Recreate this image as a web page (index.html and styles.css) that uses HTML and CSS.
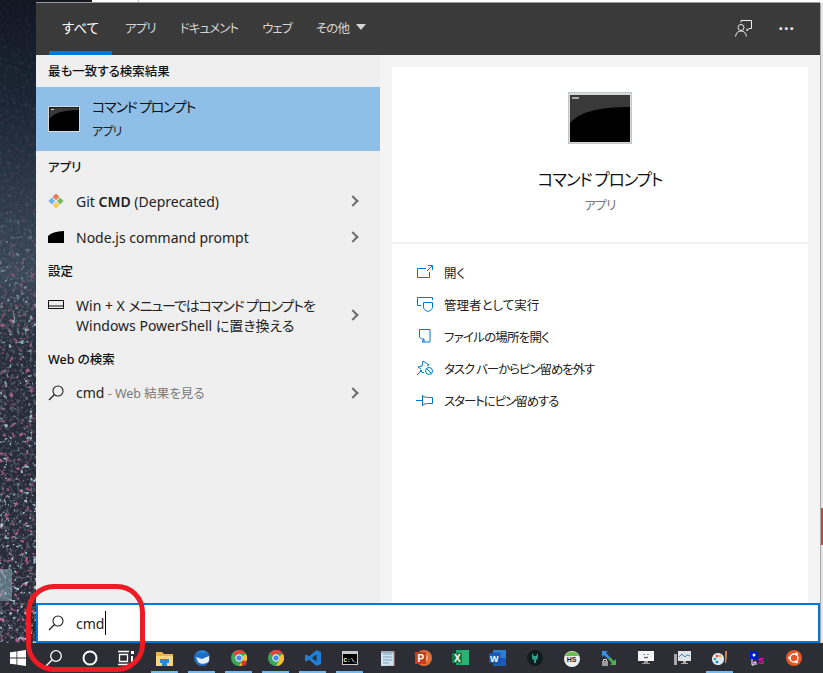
FILE: index.html
```html
<!DOCTYPE html>
<html lang="ja">
<head>
<meta charset="utf-8">
<title>cmd</title>
<link rel="stylesheet" href="styles.css">
</head>
<body>
<div class="stage">
  <div class="topstrip"><span class="ts-dark"></span><span class="ts-light"></span><span class="ts-line"></span><span class="ts-light grow"></span></div>
  <div class="middle">
    <svg class="wall" width="36" height="640" viewBox="0 0 36 640" aria-hidden="true">
      <defs>
        <filter id="spk" x="0" y="0" width="100%" height="100%"><feTurbulence type="fractalNoise" baseFrequency="0.2" numOctaves="2" seed="7"/><feColorMatrix values="0 0 0 0 .55  0 0 0 0 .13  0 0 0 0 .3  7 0 0 0 -4.3"/></filter>
        <filter id="spk2" x="0" y="0" width="100%" height="100%"><feTurbulence type="fractalNoise" baseFrequency="0.24" numOctaves="2" seed="21"/><feColorMatrix values="0 0 0 0 .42  0 0 0 0 .68  0 0 0 0 .74  0 7 0 0 -4.4"/></filter>
        <filter id="spk3" x="0" y="0" width="100%" height="100%"><feTurbulence type="fractalNoise" baseFrequency="0.3" numOctaves="2" seed="3"/><feColorMatrix values="0 0 0 0 .24  0 0 0 0 .29  0 0 0 0 .36  0 0 2 0 -1"/></filter>
        <linearGradient id="base" x1="0" y1="0" x2="0" y2="1"><stop offset="0" stop-color="#111723"/><stop offset=".16" stop-color="#1b2634"/><stop offset=".42" stop-color="#3a4856"/><stop offset=".55" stop-color="#262c38"/><stop offset="1" stop-color="#2a2c38"/></linearGradient>
        <linearGradient id="fade" x1="0" y1="0" x2="0" y2="1"><stop offset="0" stop-color="#111"/><stop offset=".3" stop-color="#222"/><stop offset=".5" stop-color="#bbb"/><stop offset="1" stop-color="#fff"/></linearGradient>
        <mask id="fm"><rect width="36" height="640" fill="url(#fade)"/></mask>
      </defs>
      <rect width="36" height="640" fill="url(#base)"/>
      <g mask="url(#fm)">
        <rect width="36" height="640" filter="url(#spk3)"/>
        <rect width="36" height="640" filter="url(#spk)"/>
        <rect width="36" height="640" filter="url(#spk2)"/>
      </g>
      <rect x="0" y="566" width="12" height="32" fill="#8fb8c4" opacity=".5"/>
    </svg>
    <div class="flyout">
      <nav class="tabs">
        <a class="tab tab-on">すべて</a>
        <a class="tab">アプリ</a>
        <a class="tab">ドキュメント</a>
        <a class="tab">ウェブ</a>
        <a class="tab">その他<i class="caret"></i></a>
        <span class="tabs-right">
          <svg class="fb" width="17" height="17" viewBox="0 0 17 17" aria-hidden="true"><path d="M6 2.500V.5h10.500v8h-2.500l-2 2.500V8.500" fill="none" stroke="#eee"/><circle cx="6" cy="7.500" r="3" fill="none" stroke="#eee"/><path d="M.6 16.500C.8 13 3 11 6 11s5 2 5.400 5.500" fill="none" stroke="#eee"/></svg>
          <span class="dots">···</span>
        </span>
      </nav>
      <div class="panes">
        <section class="left">
          <h2 class="lhead">最も一致する検索結果</h2>
          <div class="best">
            <svg class="cmd32" width="32" height="26" viewBox="0 0 32 26" aria-hidden="true"><rect x=".5" y=".5" width="31" height="25" fill="#000" stroke="#d8dbdc"/><path d="M1.500 13C5 7 14 4.500 30.500 4V1.500H1.500z" fill="#3a3a3a"/><rect x="3" y="3" width="3" height="1" fill="#ccc"/></svg>
            <div class="best-txt"><div class="best-t">コマンド プロンプト</div><div class="best-s">アプリ</div></div>
          </div>
          <h2 class="lhead">アプリ</h2>
          <div class="row r-std">
            <svg class="ric" width="16" height="16" viewBox="0 0 18 18" aria-hidden="true"><path d="M9 .5l3.800 3.800L9 8.100 5.200 4.300z" fill="#e57a52"/><path d="M.5 9l3.800-3.800L8.100 9l-3.800 3.800z" fill="#6cb4ee"/><path d="M17.500 9l-3.800-3.800L9.900 9l3.800 3.800z" fill="#7cb95e"/><path d="M9 17.500l-3.800-3.800L9 9.900l3.800 3.800z" fill="#f5c95c"/></svg>
            <span class="rtxt">Git <b>CMD</b> (Deprecated)</span><i class="chev"></i>
          </div>
          <div class="row r-std">
            <svg class="ric" width="16" height="12" viewBox="0 0 16 12" aria-hidden="true"><path d="M0 12V5C3 2 8 .5 16 0v12z" fill="#000"/></svg>
            <span class="rtxt">Node.js command prompt</span><i class="chev"></i>
          </div>
          <h2 class="lhead">設定</h2>
          <div class="row r-win">
            <svg class="ric ric-top" width="16" height="9" viewBox="0 0 16 9" aria-hidden="true"><path d="M.5.500h15v8H.500zM.5 6h15" fill="none" stroke="#111"/></svg>
            <span class="rtxt">Win + X <span class="kana">メニューではコマンド プロンプトを</span><br>Windows PowerShell に置き換える</span><i class="chev"></i>
          </div>
          <h2 class="lhead">Web の検索</h2>
          <div class="row r-std">
            <svg class="ric" width="16" height="16" viewBox="0 0 16 16" aria-hidden="true"><circle cx="10" cy="6" r="5" fill="none" stroke="#222" stroke-width="1.100"/><path d="M6.500 9.500L1 15" stroke="#222" stroke-width="1.200"/></svg>
            <span class="rtxt">cmd<span class="webhint"> - Web 結果を見る</span></span><i class="chev"></i>
          </div>
        </section>
        <section class="right">
          <div class="card">
            <div class="hero">
              <svg width="64" height="52" viewBox="0 0 64 52" aria-hidden="true"><rect x=".5" y=".5" width="63" height="51" fill="#d6d9da" stroke="#c4c7c8"/><rect x="2" y="3" width="60" height="47" fill="#000"/><path d="M2 31C12 20 30 15 62 15V3H2z" fill="#393939"/><rect x="4" y="5" width="7" height="2" fill="#aaa"/></svg>
              <div class="hero-t">コマンド プロンプト</div>
              <div class="hero-s">アプリ</div>
            </div>
            <ul class="acts">
              <li class="act"><svg width="18" height="16" viewBox="0 0 18 16" aria-hidden="true"><path d="M10 4.500H1.500v9h12V8M11 7l5-5M12 1.500h4.500V6" fill="none" stroke="#0078d7"/></svg><span>開く</span></li>
              <li class="act"><svg width="18" height="16" viewBox="0 0 18 16" aria-hidden="true"><path d="M5 9.500H1.500v-8h15V4M7.500 6.500h9V11c0 2-2 3.500-4.500 4.500-2.500-1-4.500-2.500-4.500-4.500z" fill="none" stroke="#0078d7"/></svg><span>管理者として実行</span></li>
              <li class="act"><svg width="18" height="16" viewBox="0 0 18 16" aria-hidden="true"><path d="M3.500 1.500h10.500v12.500H8v-3H5.500L3.500 9zM8 11l-2 3h2" fill="none" stroke="#0078d7"/></svg><span class="kana-s">ファイルの場所を開く</span></li>
              <li class="act"><svg width="18" height="16" viewBox="0 0 18 16" aria-hidden="true"><path d="M1 15l5-5M7 1l6 4-2 1M5 9L2 7l4-1 1-5M8 12l-1 1-3-3" fill="none" stroke="#0078d7"/><circle cx="13" cy="11" r="3.500" fill="none" stroke="#0078d7"/><path d="M10.500 8.500l5 5" stroke="#0078d7"/></svg><span class="kana">タスク バーからピン留めを外す</span></li>
              <li class="act"><svg width="18" height="16" viewBox="0 0 18 16" aria-hidden="true"><path d="M0 8.500h6M6.500 3v11M6.500 4.500l5 1h5v6h-5l-5 1" fill="none" stroke="#0078d7"/></svg><span class="kana">スタートにピン留めする</span></li>
            </ul>
          </div>
        </section>
      </div>
      <div class="searchbox">
        <svg width="16" height="16" viewBox="0 0 16 16" aria-hidden="true"><circle cx="10" cy="6" r="5" fill="none" stroke="#222" stroke-width="1.100"/><path d="M6.500 9.500L1 15" stroke="#222" stroke-width="1.200"/></svg>
        <span class="stext">cmd</span><i class="cursor"></i>
      </div>
    </div>
    <div class="edge"><i class="edge-red"></i></div>
  </div>
  <footer class="taskbar">
    <span class="tb"><svg width="16" height="16" viewBox="0 0 16 16" aria-hidden="true"><path d="M0 2.300l6.500-.9v6.200H0zM7.300 1.300L16 0v7.600H7.300zM0 8.400h6.500v6.200L0 13.700zM7.300 8.400H16V16l-8.700-1.300z" fill="#fff"/></svg></span>
    <span class="tb"><svg width="18" height="18" viewBox="0 0 18 18" aria-hidden="true"><circle cx="11" cy="7" r="5.300" fill="none" stroke="#fff" stroke-width="1.300"/><path d="M7 11l-6 6" stroke="#fff" stroke-width="1.500"/></svg></span>
    <span class="tb"><svg width="16" height="16" viewBox="0 0 16 16" aria-hidden="true"><circle cx="8" cy="8" r="6.500" fill="none" stroke="#fff" stroke-width="2"/></svg></span>
    <span class="tb"><svg width="16" height="16" viewBox="0 0 16 16" aria-hidden="true"><path d="M0 1.500h11M0 14.500h11M1.500 4.500h8v7h-8z" fill="none" stroke="#fff" stroke-width="1.300"/><path d="M13 1h3v3h-3zM13 6v9h2V6z" fill="#fff"/></svg></span>
    <span class="tb tb-gap run"><svg width="17" height="15" viewBox="0 0 17 15" aria-hidden="true"><path d="M0 1h6l2 2h9v12H0z" fill="#e9b44c"/><path d="M0 5h17v10H0z" fill="#f9d77e"/><path d="M4 8h9v4h-2v-2H6v2H4z" fill="#2b88d8"/><path d="M6 10h5v5H6z" fill="#2b88d8"/></svg></span>
    <span class="tb run"><svg width="16" height="16" viewBox="0 0 16 16" aria-hidden="true"><circle cx="8" cy="8" r="8" fill="#1f6fc4"/><path d="M2 7l6 2 7-3v5c-2 3-8 4-11 1z" fill="#e8eef5"/><path d="M3 3c3-3 8-3 10 0-3-1-7-1-10 0z" fill="#2f8fe0"/></svg></span>
    <span class="tb run"><svg width="16" height="16" viewBox="0 0 16 16" aria-hidden="true"><circle cx="8" cy="8" r="8" fill="#3aa757"/><path d="M8 0a8 8 0 0 1 7 4H8a4 4 0 0 0-3.500 2L2 2.800A8 8 0 0 1 8 0z" fill="#e8453c"/><path d="M15 4a8 8 0 0 1-7 12l3.500-6A4 4 0 0 0 11.500 6z" fill="#fbc02d"/><circle cx="8" cy="8" r="3.300" fill="#4a8af4" stroke="#fff"/><circle cx="13" cy="13" r="2.500" fill="#d33"/></svg></span>
    <span class="tb run"><svg width="16" height="16" viewBox="0 0 16 16" aria-hidden="true"><circle cx="8" cy="8" r="8" fill="#3aa757"/><path d="M8 0a8 8 0 0 1 7 4H8a4 4 0 0 0-3.500 2L2 2.800A8 8 0 0 1 8 0z" fill="#e8453c"/><path d="M15 4a8 8 0 0 1-7 12l3.500-6A4 4 0 0 0 11.500 6z" fill="#fbc02d"/><circle cx="8" cy="8" r="3.300" fill="#4a8af4" stroke="#fff"/></svg></span>
    <span class="tb run"><svg width="16" height="16" viewBox="0 0 16 16" aria-hidden="true"><path d="M11.500 0L16 2v12l-4.500 2L4 9.500 1.500 11.500 0 10.500V5.500l1.500-1L4 6.500zM11.500 4.500L7 8l4.500 3.500z" fill="#1f7fd4"/></svg></span>
    <span class="tb run"><svg width="16" height="14" viewBox="0 0 16 14" aria-hidden="true"><rect width="16" height="14" fill="#c8c8c8"/><rect x="1" y="3" width="14" height="10" fill="#000"/><text x="1.500" y="10.500" class="cmdtxt">C:\_</text></svg></span>
    <span class="tb"><svg width="16" height="16" viewBox="0 0 16 16" aria-hidden="true"><path d="M2 1h13v15H2z" fill="#cfe3f2"/><path d="M4 4h9M4 7h9M4 10h9M4 13h6" stroke="#7f9fb8"/><path d="M2 1h13v2H2z" fill="#9ab"/><path d="M15 1v15H8" fill="none" stroke="#c98"/></svg></span>
    <span class="tb"><svg width="17" height="16" viewBox="0 0 17 16" aria-hidden="true"><circle cx="9" cy="8" r="8" fill="#e0703a"/><circle cx="9" cy="8" r="4" fill="#f2a77a"/><rect y="2" width="11" height="12" fill="#c43e1c"/><text x="2.500" y="12" class="offtxt">P</text></svg></span>
    <span class="tb"><svg width="17" height="16" viewBox="0 0 17 16" aria-hidden="true"><rect x="4" width="13" height="15" fill="#21a366"/><path d="M10 0h7v15h-7z" fill="#33c481" opacity=".5"/><rect y="3" width="10" height="10" fill="#107c41"/><text x="2" y="11.500" class="offtxt">X</text></svg></span>
    <span class="tb"><svg width="17" height="16" viewBox="0 0 17 16" aria-hidden="true"><rect x="4" width="13" height="16" fill="#2b7cd3"/><path d="M4 8h13v8H4z" fill="#185abd"/><rect y="3" width="11" height="10" fill="#185abd" stroke="#103f91" stroke-width=".5"/><text x="1" y="11.500" class="offtxt offw">W</text></svg></span>
    <span class="tb"><svg width="16" height="16" viewBox="0 0 16 16" aria-hidden="true"><circle cx="8" cy="8" r="8" fill="#111c1f"/><path d="M5 3v4c0 2 1 3 2 3v3h2v-3c1 0 2-1 2-3V3l-2 3H7z" fill="#2a9d8f"/></svg></span>
    <span class="tb"><svg width="16" height="17" viewBox="0 0 16 17" aria-hidden="true"><circle cx="8" cy="9" r="8" fill="#eee"/><path d="M1 6a8 8 0 0 1 14 0z" fill="#6abf4b"/><text x="2.800" y="12" class="hstxt">HS</text></svg></span>
    <span class="tb"><svg width="16" height="17" viewBox="0 0 16 17" aria-hidden="true"><path d="M1 1h6L5 3l4 4-2 2-4-4-2 2z" fill="#3b8fe0"/><path d="M15 15H9l2-2-4-4 2-2 4 4 2-2z" fill="#4cb04c"/><rect x="1" y="11" width="6" height="5" fill="#999"/><path d="M2.500 11V9.500h3V11" fill="none" stroke="#ddd"/></svg></span>
    <span class="tb"><svg width="16" height="14" viewBox="0 0 16 14" aria-hidden="true"><rect width="16" height="10" fill="#f4f4f4"/><path d="M6 3v1M10 3v1M6 6c1 1 3 1 4 0" stroke="#333" fill="none"/><path d="M6 10h4v2h2v1H4v-1h2z" fill="#999"/></svg></span>
    <span class="tb"><svg width="17" height="16" viewBox="0 0 17 16" aria-hidden="true"><rect y="4" width="3" height="11" fill="#aaa"/><rect x="4" y="1" width="13" height="10" fill="#dfe3e6"/><path d="M5 7l3-3 3 3 2-2 3 1" fill="none" stroke="#2b88d8"/><path d="M9 11h3v2h2v1H7v-1h2z" fill="#aaa"/></svg></span>
    <span class="tb run"><svg width="17" height="16" viewBox="0 0 17 16" aria-hidden="true"><path d="M1 9c0-4 3-6 6-6s6 2 6 6-3 6-6 6-6-2-6-6z" fill="#dce6ee"/><circle cx="4" cy="9" r="1.300" fill="#3a8"/><circle cx="6" cy="6" r="1.300" fill="#d44"/><circle cx="9" cy="6" r="1.300" fill="#ea3"/><circle cx="6" cy="12" r="1.300" fill="#27c"/><path d="M14 1h2v5l-1 7h-1z" fill="#d9813a"/></svg></span>
    <span class="tb"><svg width="16" height="16" viewBox="0 0 16 16" aria-hidden="true"><rect x="1" y="1" width="8" height="8" fill="#0019d6"/><circle cx="5" cy="5" r="1.500" fill="#fff"/><path d="M3 9v6h2v-3h2v3" fill="none" stroke="#fff"/><text x="9" y="14" class="pstxt">S</text></svg></span>
    <span class="tb"><svg width="16" height="16" viewBox="0 0 16 16" aria-hidden="true"><circle cx="8" cy="8" r="8" fill="#e95420"/><circle cx="8" cy="8" r="4" fill="none" stroke="#fff" stroke-width="1.400"/><circle cx="3.500" cy="8" r="1.400" fill="#fff"/><circle cx="10.500" cy="4" r="1.400" fill="#fff"/><circle cx="10.500" cy="12" r="1.400" fill="#fff"/></svg></span>
  </footer>
  <div class="annot"></div>
</div>
</body>
</html>
```
FILE: styles.css
```css
* { box-sizing: border-box; }
html, body { margin: 0; padding: 0; }
body {
  width: 823px; height: 673px; overflow: hidden;
  font-family: "Noto Sans", "Noto Sans CJK JP", sans-serif;
  font-feature-settings: "palt";
  color: #1b1b1b;
}
h2, ul { margin: 0; padding: 0; list-style: none; }
i { display: block; }
svg { display: block; flex: none; }

.stage { position: relative; width: 823px; height: 673px; overflow: hidden; display: flex; flex-direction: column; background: #1b2331; }

.topstrip { height: 3px; display: flex; flex: none; }
.ts-dark { width: 92px; background: #111723; }
.ts-light { width: 46px; background: #fff; }
.ts-line { width: 1px; background: #bbb; }
.grow { flex: 1; width: auto; }

.middle { flex: none; height: 640px; display: flex; }
.wall { flex: none; }
.flyout { width: 784px; display: flex; flex-direction: column; box-shadow: 0 -1px 0 #9a9a9a; }
.edge { flex: 1; background: #e6e6e6; border-left: 1px solid #a9a9a9; padding-top: 505px; }
.edge-red { height: 37px; background: #c8433c; }

.tabs { height: 52px; flex: none; background: #3a3a3a; display: flex; align-items: stretch; padding-left: 13px; color: #d4d4d4; font-size: 12.500px; letter-spacing: -.9px; }
.tab { display: flex; align-items: center; padding: 0 12px 0 13px; border-bottom: 4px solid transparent; }
.tab:nth-child(n+3) { padding: 0 12px; }
.tab-on { color: #fff; width: 63px; padding: 0; justify-content: center; border-bottom-color: #0078d7; font-size: 13.500px; letter-spacing: 0; }
.caret { width: 0; height: 0; margin-left: 7px; border: 5px solid transparent; border-top: 6px solid #d4d4d4; border-bottom: 0; }
.tabs-right { margin-left: auto; display: flex; align-items: center; gap: 27px; padding-right: 25px; padding-bottom: 2px; letter-spacing: 0; }
.dots { font-size: 16px; letter-spacing: 1px; color: #eee; font-weight: 700; }

.panes { height: 548px; flex: none; display: flex; }
.left { width: 344px; flex: none; background: #efefef; }
.right { flex: 1; background: #f4f4f4; padding: 12px 12px 0; display: flex; }
.card { flex: 1; background: #fff; }

.lhead { font-size: 12.500px; font-weight: 500; color: #111; padding: 8px 0 0 12px; height: 32px; line-height: 18px; }

.best { height: 64px; background: #8fbfe7; display: flex; align-items: center; padding-left: 12px; gap: 12px; }
.best-txt { display: flex; flex-direction: column; }
.best-t { font-size: 14px; line-height: 20px; letter-spacing: -1.200px; color: #111; margin-bottom: 3px; margin-top: -4px; }
.best-s { font-size: 12px; line-height: 18px; letter-spacing: -.8px; color: #222; padding-top: 3px; margin-bottom: -3px; }

.row { display: flex; align-items: center; padding: 0 21px 0 12px; font-size: 14px; line-height: 20px; color: #222; }
.r-std { height: 36px; }
.r-win { height: 56px; }
.ric { margin-right: 12px; }
.ric-top { margin-bottom: 22px; }
.rtxt { flex: 1; font-size: 14px; padding-top: 1px; }
.rtxt b { font-weight: 600; }
.kana { letter-spacing: -1.100px; }
.kana-s { letter-spacing: -.8px; }
.webhint { font-size: 12.500px; color: #7a7a7a; }
.chev { width: 8px; height: 8px; border-top: 2px solid #6e6e6e; border-right: 2px solid #6e6e6e; transform: rotate(45deg); margin-right: 2px; }

.hero { height: 177px; padding-top: 25px; border-bottom: 2px solid #f2f2f2; display: flex; flex-direction: column; align-items: center; }
.hero-t { margin-top: 24px; font-size: 16.500px; line-height: 24px; letter-spacing: -1.100px; color: #111; }
.hero-s { margin-top: 5px; font-size: 12.500px; line-height: 18px; letter-spacing: -.8px; color: #777; }

.acts { padding: 12px 0 0 24px; }
.act { height: 32px; display: flex; align-items: center; gap: 10px; font-size: 12.500px; color: #222; }

.searchbox { height: 40px; flex: none; background: #fff; border: 2px solid #0078d7; display: flex; align-items: center; padding-left: 10px; }
.stext { margin-left: 12px; font-size: 14px; color: #222; }
.cursor { width: 1px; height: 24px; background: #000; margin-left: 1px; }

.taskbar { height: 30px; flex: none; background: #2d2d36; display: flex; }
.tb { width: 36px; flex: none; display: flex; align-items: center; justify-content: center; position: relative; }
.tb:nth-child(n+5) { width: 37px; }
.tb-gap { margin-left: 2px; }
.run::after { content: ""; position: absolute; left: 5px; right: 5px; bottom: 0; height: 2px; background: #76b9ed; }

.cmdtxt { font: 700 6px "Liberation Mono", monospace; fill: #fff; }
.offtxt { font: 700 10px "Liberation Sans", sans-serif; fill: #fff; }
.offw { font-size: 9px; }
.hstxt { font: 700 7px "Liberation Sans", sans-serif; fill: #222; }
.pstxt { font: 700 9px "Liberation Sans", sans-serif; fill: #e815c8; }

.annot { position: absolute; left: 26px; top: 584px; width: 119px; height: 88px; border: 5px solid #ed1c24; border-radius: 28px; }
```
